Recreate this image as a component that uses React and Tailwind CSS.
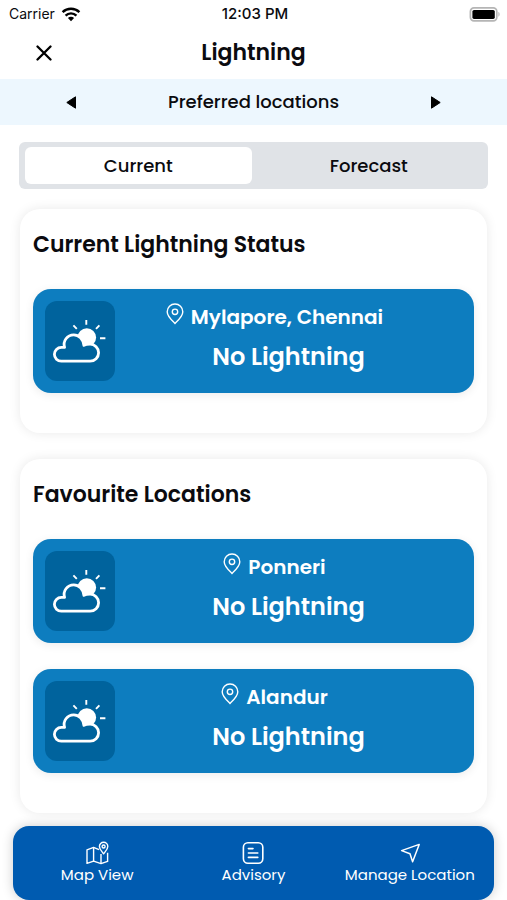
import { useState } from 'react';

const favourites = [
  { id: 1, name: 'Ponneri', status: 'No Lightning' },
  { id: 2, name: 'Alandur', status: 'No Lightning' },
];

function WifiIcon() {
  return (
    <svg viewBox="0 0 20 15" className="h-[15px] w-5" fill="none" stroke="black" strokeWidth="2.4">
      <path d="M1.6 5.2a12 12 0 0 1 16.8 0" />
      <path d="M4.6 8.6a7.6 7.6 0 0 1 10.8 0" />
      <path d="M10 14.2 6.9 11a4.4 4.4 0 0 1 6.2 0z" fill="black" stroke="none" />
    </svg>
  );
}

function BatteryIcon() {
  return (
    <svg viewBox="0 0 32 15" className="h-[15px] w-8">
      <rect x="1.4" y="0.9" width="26.4" height="13" rx="3.6" fill="white" stroke="#b5b5b5" strokeWidth="1.7" />
      <rect x="3.4" y="2.9" width="22.4" height="9" rx="1.6" fill="black" />
      <path d="M29.4 5.1c1.6.4 1.6 4.2 0 4.6z" fill="#b5b5b5" />
    </svg>
  );
}

function WeatherIcon() {
  return (
    <svg viewBox="0 0 52 44" className="h-11 w-[52px] overflow-visible" fill="none" stroke="white">
      <circle cx="32.8" cy="18.5" r="9.3" fill="white" stroke="none" />
      <path
        d="M7.3 42.2h28.8a8.5 8.5 0 1 0 0-17c-2.4 0-4.6.2-6.2 1.2-.6-6-5-10.6-10.1-10.6a9.6 9.6 0 0 0-9.2 12.6H7.3a6.9 6.9 0 0 0 0 13.8z"
        fill="#00639d"
        strokeWidth="2.8"
        strokeLinejoin="round"
      />
      <path d="M32.3 1v4.7M19.4 6.3l3.4 3.6M45.4 6.3 42 9.9M46 19.3h5.4" strokeWidth="1.9" />
    </svg>
  );
}

function PinIcon() {
  return (
    <svg viewBox="0 0 18 22" className="h-[22px] w-[18px] shrink-0" fill="none" stroke="white" strokeWidth="1.4">
      <path d="M9 20.4C6.6 18 1.2 13.6 1.2 8.8a7.8 7.8 0 0 1 15.6 0c0 4.8-5.4 9.2-7.8 11.6z" />
      <circle cx="9" cy="8.8" r="2.7" />
    </svg>
  );
}

function MapIcon() {
  return (
    <svg viewBox="0 0 24 24" className="size-6" fill="none" stroke="white" strokeWidth="1.4" strokeLinejoin="round">
      <path d="M14 8.6 8.6 6.4 2 8.8v13.6l6.6-2.2 7.4 2.4 6.6-2.2v-8.6" />
      <path d="M8.6 6.4v13.8M16 13v9.6" />
      <path d="M18.6 12.8c-1.6-2.4-4.2-4.6-4.2-7.3a4.2 4.2 0 0 1 8.4 0c0 2.7-2.6 4.9-4.2 7.3z" />
      <circle cx="18.6" cy="5.5" r="1.5" />
    </svg>
  );
}

function AdvisoryIcon() {
  return (
    <svg viewBox="0 0 24 24" className="size-6" fill="none" stroke="white" strokeWidth="1.6" strokeLinecap="round">
      <rect x="2.4" y="1.8" width="19.4" height="20.4" rx="4.5" />
      <path d="M7.4 7.6h4.6M7.4 12h9.4M7.4 16.4h9.4" />
    </svg>
  );
}

function SendIcon() {
  return (
    <svg viewBox="0 0 24 24" className="size-6" fill="none" stroke="white" strokeWidth="1.5" strokeLinejoin="round">
      <path d="M21.2 3.4 3.6 9.6l8.4 3.2 2.6 8z" />
    </svg>
  );
}

function LocationCard({ name, status }) {
  return (
    <article className="flex items-center rounded-[18px] bg-[#0d7dbf] p-3 text-white shadow-[0_2px_10px_rgba(0,0,0,0.08)]">
      <div className="flex h-20 w-[70px] shrink-0 items-center justify-center rounded-xl bg-[#00639d]">
        <WeatherIcon />
      </div>
      <div className="flex flex-1 flex-col items-center pb-1">
        <h3 className="flex gap-[7px] pr-7 text-xl leading-7 font-semibold">
          <PinIcon />
          {name}
        </h3>
        <p className="mt-2 text-2xl leading-9 font-semibold">{status}</p>
      </div>
    </article>
  );
}

function Section({ title, children }) {
  return (
    <section className="rounded-[20px] bg-white px-[13px] pt-[18px] pb-10 shadow-[0_0_12px_rgba(0,0,0,0.09)]">
      <h2 className="text-[22px] leading-9 font-semibold">{title}</h2>
      <div className="mt-[26px] flex flex-col gap-[26px]">{children}</div>
    </section>
  );
}

function Tab({ label, active, onClick }) {
  return (
    <button
      type="button"
      aria-pressed={active}
      onClick={onClick}
      className={`h-[37px] flex-1 rounded-md text-lg font-medium ${active ? 'bg-white' : ''}`}
    >
      {label}
    </button>
  );
}

function NavButton({ icon, label }) {
  return (
    <button type="button" className="flex flex-col items-center text-[15px] leading-5 text-white">
      {icon}
      {label}
    </button>
  );
}

export default function App() {
  const [tab, setTab] = useState('current');

  return (
    <div className="flex h-screen flex-col overflow-hidden bg-white font-['Poppins','Inter',sans-serif] text-[#0b0b0f]">
      {/* Status bar */}
      <div className="grid h-7 shrink-0 grid-cols-3 items-center pr-[6px] pl-[9px] font-['Inter',sans-serif] text-sm">
        <div className="flex items-center gap-[6px]">
          <span>Carrier</span>
          <WifiIcon />
        </div>
        <div className="text-center text-[15px] font-medium">12:03 PM</div>
        <div className="flex justify-end">
          <BatteryIcon />
        </div>
      </div>

      {/* Header */}
      <header className="grid h-[51px] shrink-0 grid-cols-[1fr_auto_1fr] items-center px-9 pb-[2px]">
        <button type="button" aria-label="Close" className="justify-self-start">
          <svg viewBox="0 0 16 16" className="size-4" stroke="black" strokeWidth="2.3" strokeLinecap="round">
            <path d="M1.5 1.5l13 13M14.5 1.5l-13 13" />
          </svg>
        </button>
        <h1 className="text-[22px] font-semibold">Lightning</h1>
      </header>

      {/* Location group switcher */}
      <div className="flex h-[46px] shrink-0 items-center justify-between bg-[#edf7fe] px-[66px]">
        <button type="button" aria-label="Previous">
          <svg viewBox="0 0 10 13" className="h-[13px] w-[10px]">
            <path d="M9.5.8v11.4L.8 6.5z" stroke="black" strokeLinejoin="round" />
          </svg>
        </button>
        <span className="text-lg font-medium">Preferred locations</span>
        <button type="button" aria-label="Next">
          <svg viewBox="0 0 10 13" className="h-[13px] w-[10px]">
            <path d="M.5.8v11.4l8.7-5.7z" stroke="black" strokeLinejoin="round" />
          </svg>
        </button>
      </div>

      <main className="flex min-h-0 flex-1 flex-col px-[19px] pt-[17px]">
        <div className="flex gap-1 rounded-md bg-[#e0e3e7] px-[6px] py-[5px]">
          <Tab label="Current" active={tab === 'current'} onClick={() => setTab('current')} />
          <Tab label="Forecast" active={tab === 'forecast'} onClick={() => setTab('forecast')} />
        </div>

        <div className="mt-5 flex flex-col gap-[26px] px-px">
          <Section title="Current Lightning Status">
            <LocationCard name="Mylapore, Chennai" status="No Lightning" />
          </Section>
          <Section title="Favourite Locations">
            {favourites.map((item) => (
              <LocationCard key={item.id} name={item.name} status={item.status} />
            ))}
          </Section>
        </div>
      </main>

      {/* Bottom navigation */}
      <nav className="mx-[13px] grid h-[74px] shrink-0 grid-cols-3 items-center rounded-2xl bg-[#005bb0] px-[6px] shadow-[0_0_12px_rgba(0,0,0,0.2)]">
        <NavButton icon={<MapIcon />} label="Map View" />
        <NavButton icon={<AdvisoryIcon />} label="Advisory" />
        <NavButton icon={<SendIcon />} label="Manage Location" />
      </nav>
    </div>
  );
}
